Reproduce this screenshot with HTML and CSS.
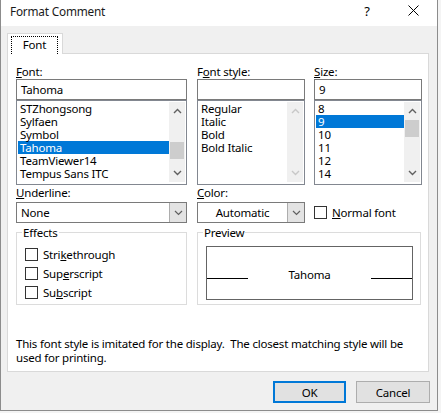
FILE: index.html
```html
<!DOCTYPE html>
<html>
<head>
<meta charset="utf-8">
<link rel="stylesheet" href="styles.css">
</head>
<body>
<div class="dialog">
  <div class="titlebar">
    <span class="title">Format Comment</span>
    <span class="help">?</span>
    <span class="close"><svg width="11" height="11" viewBox="0 0 11 11"><path d="M0.5 0.5 L10.5 10.5 M10.5 0.5 L0.5 10.5" stroke="#000" stroke-width="1" fill="none"/></svg></span>
  </div>
  <div class="body">
    <div class="tabs"><div class="tab"><span class="tab-focus">Font</span></div></div>
    <div class="panel">
      <div class="grid">
        <div class="col c1">
          <div class="lbl"><u>F</u>ont:</div>
          <div class="textbox">Tahoma</div>
          <div class="list">
            <div class="items">
              <div class="item">STZhongsong</div>
              <div class="item">Sylfaen</div>
              <div class="item">Symbol</div>
              <div class="item sel">Tahoma</div>
              <div class="item">TeamViewer14</div>
              <div class="item">Tempus Sans ITC</div>
            </div>
            <div class="sbar">
              <svg class="arr" width="9" height="6" viewBox="0 0 9 6"><polyline points="1,5 4.5,1.5 8,5" fill="none" stroke="#606060" stroke-width="1.4"/></svg>
              <div class="track"><div class="thumb thumb-font"></div></div>
              <svg class="arr" width="9" height="6" viewBox="0 0 9 6"><polyline points="1,1 4.5,4.5 8,1" fill="none" stroke="#606060" stroke-width="1.4"/></svg>
            </div>
          </div>
        </div>
        <div class="col c2">
          <div class="lbl">F<u>o</u>nt style:</div>
          <div class="textbox"></div>
          <div class="list">
            <div class="items">
              <div class="item">Regular</div>
              <div class="item">Italic</div>
              <div class="item">Bold</div>
              <div class="item">Bold Italic</div>
            </div>
            <div class="sbar">
              <svg class="arr" width="9" height="6" viewBox="0 0 9 6"><polyline points="1,5 4.5,1.5 8,5" fill="none" stroke="#c8c8c8" stroke-width="1.4"/></svg>
              <div class="track"></div>
              <svg class="arr" width="9" height="6" viewBox="0 0 9 6"><polyline points="1,1 4.5,4.5 8,1" fill="none" stroke="#c8c8c8" stroke-width="1.4"/></svg>
            </div>
          </div>
        </div>
        <div class="col c3">
          <div class="lbl"><u>S</u>ize:</div>
          <div class="textbox">9</div>
          <div class="list">
            <div class="items">
              <div class="item">8</div>
              <div class="item sel">9</div>
              <div class="item">10</div>
              <div class="item">11</div>
              <div class="item">12</div>
              <div class="item">14</div>
            </div>
            <div class="sbar">
              <svg class="arr" width="9" height="6" viewBox="0 0 9 6"><polyline points="1,5 4.5,1.5 8,5" fill="none" stroke="#606060" stroke-width="1.4"/></svg>
              <div class="track"><div class="thumb thumb-size"></div></div>
              <svg class="arr" width="9" height="6" viewBox="0 0 9 6"><polyline points="1,1 4.5,4.5 8,1" fill="none" stroke="#606060" stroke-width="1.4"/></svg>
            </div>
          </div>
        </div>

        <div class="col c1">
          <div class="lbl lbl2"><u>U</u>nderline:</div>
          <div class="combo"><span class="combo-text">None</span><span class="ddbtn"><svg width="9" height="6" viewBox="0 0 9 6"><polyline points="1,1 4.5,4.5 8,1" fill="none" stroke="#606060" stroke-width="1.2"/></svg></span></div>
        </div>
        <div class="col c2">
          <div class="lbl lbl2"><u>C</u>olor:</div>
          <div class="combo"><span class="combo-text center">Automatic</span><span class="ddbtn"><svg width="9" height="6" viewBox="0 0 9 6"><polyline points="1,1 4.5,4.5 8,1" fill="none" stroke="#606060" stroke-width="1.2"/></svg></span></div>
        </div>
        <div class="col c3">
          <div class="lbl lbl2">&nbsp;</div>
          <div class="check normal"><span class="box"></span><span><u>N</u>ormal font</span></div>
        </div>

        <div class="group effects">
          <div class="gtitle">Effects</div>
          <div class="check row"><span class="box"></span><span>Stri<u>k</u>ethrough</span></div>
          <div class="check row"><span class="box"></span><span>Sup<u>e</u>rscript</span></div>
          <div class="check row"><span class="box"></span><span>Su<u>b</u>script</span></div>
        </div>
        <div class="group preview">
          <div class="gtitle">Preview</div>
          <div class="pbox">
            <span class="pline"></span>
            <span class="ptext">Tahoma</span>
            <span class="pline"></span>
          </div>
        </div>
      </div>
      <p class="note">This font style is imitated for the display.&nbsp; The closest matching style will be used for printing.</p>
    </div>
    <div class="buttons">
      <button class="btn default">OK</button>
      <button class="btn">Cancel</button>
    </div>
  </div>
</div>
</body>
</html>
```
FILE: styles.css
```css
* { box-sizing: border-box; }
html, body { margin: 0; padding: 0; }
body {
  width: 441px;
  height: 413px;
  background: #f4f4f4;
  font-family: "Noto Sans", "Open Sans", sans-serif;
  font-size: 11.5px;
  letter-spacing: -0.2px;
  color: #000;
  overflow: hidden;
}
.dialog {
  width: 438px;
  height: 411px;
  border: 1px solid #8c8c8c;
  border-top: none;
  background: #f0f0f0;
  display: flex;
  flex-direction: column;
}
.titlebar {
  height: 26px;
  background: #fff;
  display: flex;
  align-items: center;
  padding-left: 9px;
  flex: none;
}
.title { flex: 1; font-size: 11.8px; line-height: 16px; margin-top: -4px; color: #1a1a1a; }
.help { width: 12px; text-align: center; margin-right: 35px; margin-top: -4px; font-size: 13px; }
.close { width: 11px; height: 11px; margin-right: 18px; margin-top: -6px; display: flex; }

.body { flex: 1; display: flex; flex-direction: column; padding: 7px 0 0 6px; }
.tabs { display: flex; height: 20px; }
.tab {
  width: 56px;
  height: 21px;
  background: #fff;
  border: 1px solid #d9d9d9;
  border-bottom: none;
  padding: 2px 0 0 3px;
  position: relative;
  z-index: 1;
}
.tab-focus {
  display: block;
  width: 47px;
  height: 18px;
  border: 1px dotted #000;
  border-bottom: none;
  text-align: center;
  line-height: 16px;
}
.panel {
  width: 422px;
  height: 319px;
  background: #fff;
  border: 1px solid #d9d9d9;
  padding: 10px 5px 6px 8px;
}
.grid {
  display: grid;
  grid-template-columns: 171px 10px 108px 9px 108px;
}
.col { display: flex; flex-direction: column; }
.c1 { grid-column: 1; }
.c2 { grid-column: 3; }
.c3 { grid-column: 5; }
.lbl { line-height: 15px; height: 15px; white-space: nowrap; }
.lbl2 { margin-bottom: 2px; }
.textbox {
  height: 21px;
  border: 1px solid #7a7a7a;
  padding-left: 4px;
  line-height: 19px;
}
.list {
  height: 85px;
  border: 1px solid #828790;
  display: flex;
  padding: 1px;
}
.items { flex: 1; padding-top: 0; }
.item { height: 13px; line-height: 13px; padding-left: 2px; white-space: nowrap; }
.item.sel { background: #0078d7; color: #fff; }
.sbar {
  width: 16px;
  background: #f0f0f0;
  display: flex;
  flex-direction: column;
  align-items: center;
  margin-bottom: 1px;
}
.arr { flex: none; margin: 6px 0; }
.track { flex: 1; width: 100%; display: flex; flex-direction: column; }
.thumb { background: #cdcdcd; margin: 0 1px; height: 17px; }
.thumb-font { margin-top: 22px; }
.thumb-size { margin-top: 0px; }

.combo {
  height: 21px;
  border: 1px solid #7a7a7a;
  display: flex;
}
.combo-text { flex: 1; padding-left: 4px; line-height: 19px; }
.combo-text.center { text-align: center; padding-left: 0; }
.ddbtn {
  width: 17px;
  background: #e3e3e3;
  border-left: 1px solid #adadad;
  display: flex;
  align-items: center;
  justify-content: center;
}
.check { display: flex; align-items: center; white-space: nowrap; }
.box {
  width: 13px;
  height: 13px;
  border: 1px solid #333;
  background: #fff;
  margin-right: 5px;
  flex: none;
}
.normal { height: 21px; }

.group {
  margin-top: 9px;
  height: 73px;
  border: 1px solid #dcdcdc;
}
.effects { grid-column: 1; padding: 0 8px; }
.preview { grid-column: 3 / 6; margin-right: 1px; padding: 0 7px 0 8px; }
.gtitle {
  display: block;
  width: max-content;
  margin: -8px 0 0 -3px;
  padding: 0 1px;
  background: #fff;
  line-height: 15px;
  height: 15px;
}
.check.row { height: 19px; }
.effects .gtitle { margin-bottom: 5px; }
.pbox {
  margin-top: 6px;
  height: 54px;
  border: 1px solid #646464;
  display: flex;
  align-items: center;
}
.pline { width: 41px; height: 1px; background: #000; margin-top: 11px; flex: none; }
.ptext { flex: 1; text-align: center; margin-top: 3px; }

.note {
  margin: 32px 0 0 0;
  line-height: 14px;
}
.buttons {
  display: flex;
  justify-content: flex-end;
  gap: 10px;
  margin-top: 9px;
  padding-right: 7px;
}
.btn {
  width: 74px;
  height: 22px;
  border: 1px solid #adadad;
  background: #e1e1e1;
  font-family: inherit;
  font-size: 11.5px;
  letter-spacing: -0.2px;
  color: #000;
  padding: 0;
}
.btn.default { border: 2px solid #0078d7; width: 73px; }
```
